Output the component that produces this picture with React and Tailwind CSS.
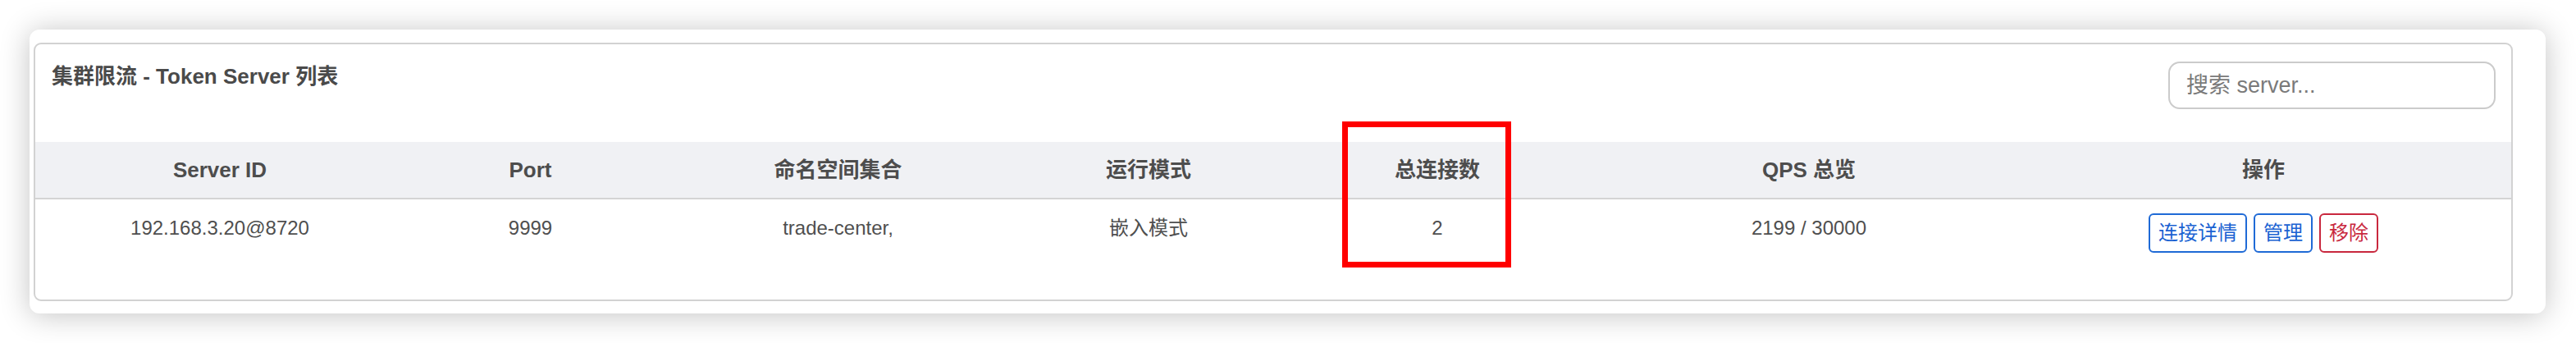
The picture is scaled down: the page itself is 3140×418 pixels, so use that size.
import React from "react";

const cols = [
  { w: "w-[450px]", h: "Server ID", v: "192.168.3.20@8720" },
  { w: "w-[307px]", h: "Port", v: "9999" },
  { w: "w-[443px]", h: "命名空间集合", v: "trade-center," },
  { w: "w-[314px]", h: "运行模式", v: "嵌入模式" },
  { w: "w-[390px]", h: "总连接数", v: "2" },
  { w: "w-[516px]", h: "QPS 总览", v: "2199 / 30000" },
];

export default function App() {
  return (
    <div
      className="relative w-[3140px] h-[418px] bg-white pt-[36px] pl-[36px] overflow-hidden"
      style={{ fontFamily: '"Liberation Sans", Arial, "Noto Sans CJK SC", sans-serif' }}
    >
      <div className="w-[3067px] h-[346px] bg-white rounded-[12px] shadow-[0_2px_36px_rgba(0,0,0,0.24)] pl-[5px] pt-[16px]">
        <div className="w-[3022px] h-[315px] border-2 border-[#d2d2d2] rounded-[9px] flex flex-col">
          <div className="flex justify-between items-start pt-[21px] pl-[20px] pr-[19px] mb-[40px]">
            <div className="text-[26px] leading-[36px] font-bold text-[#4a4a4a]">
              集群限流 - Token Server 列表
            </div>
            <input
              placeholder="搜索 server..."
              className="w-[399px] h-[58px] border-2 border-[#cbcbcb] rounded-[14px] px-[20px] text-[27px] text-[#555] placeholder:text-[#7a7a7a] outline-none"
            />
          </div>
          <div className="flex h-[70px] bg-[#f0f1f4] border-b-2 border-[#d4d4d4]">
            {cols.map((c) => (
              <div key={c.h} className={`${c.w} flex items-center justify-center text-[26px] font-bold text-[#4d4d4d]`}>
                {c.h}
              </div>
            ))}
            <div className="w-[592px] flex items-center justify-center text-[26px] font-bold text-[#4d4d4d]">操作</div>
          </div>
          <div className="flex pt-[17px]">
            {cols.map((c) => (
              <div key={c.h} className={`${c.w} flex justify-center text-[24px] leading-[36px] text-[#4f4f4f]`}>
                {c.v}
              </div>
            ))}
            <div className="w-[592px] flex justify-center gap-[8px] text-[24px]">
              <button className="h-[48px] px-[10px] border-2 border-[#1f6ad6] rounded-[6px] text-[#1a62d2] leading-[30px]">连接详情</button>
              <button className="h-[48px] px-[10px] border-2 border-[#1f6ad6] rounded-[6px] text-[#1a62d2] leading-[30px]">管理</button>
              <button className="h-[48px] px-[10px] border-2 border-[#c9283e] rounded-[6px] text-[#c9283e] leading-[30px]">移除</button>
            </div>
          </div>
        </div>
      </div>
      <div className="absolute left-[1636px] top-[148px] w-[206px] h-[178px] border-[7px] border-[#ff0000]" />
    </div>
  );
}
